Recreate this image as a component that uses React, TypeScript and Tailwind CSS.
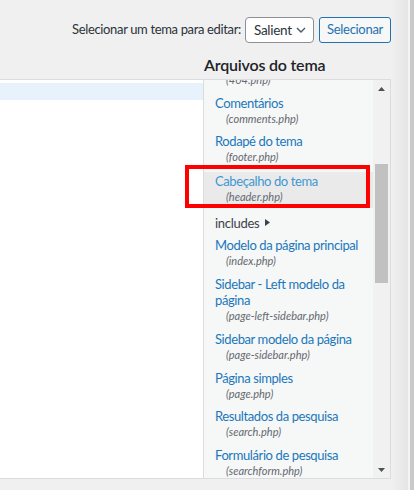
import React from "react";

type Item = { title: string[]; file?: string; hl?: boolean; dir?: boolean };

const items: Item[] = [
  { title: ["Comentários"], file: "comments.php" },
  { title: ["Rodapé do tema"], file: "footer.php" },
  { title: ["Cabeçalho do tema"], file: "header.php", hl: true },
  { title: ["includes"], dir: true },
  { title: ["Modelo da página principal"], file: "index.php" },
  { title: ["Sidebar - Left modelo da", "página"], file: "page-left-sidebar.php" },
  { title: ["Sidebar modelo da página"], file: "page-sidebar.php" },
  { title: ["Página simples"], file: "page.php" },
  { title: ["Resultados da pesquisa"], file: "search.php" },
  { title: ["Formulário de pesquisa"], file: "searchform.php" },
  { title: ["Single"], file: "single.php" },
];

function FileItem({ item }: { item: Item }) {
  return (
    <div className={item.hl ? "bg-[#eaeaea] pt-[1px] pb-[3px]" : ""}>
      {item.dir ? (
        <div className="flex items-center pl-[11px] leading-[16px] tracking-[-0.3px] text-[#3c434a]">
          <span>{item.title[0]}</span>
          <svg width="5" height="7" viewBox="0 0 5 7" className="ml-[6px]">
            <path d="M0 0 L5 3.5 L0 7 Z" fill="#3c434a" />
          </svg>
        </div>
      ) : (
        item.title.map((t) => (
          <div
            key={t}
            className={
              "whitespace-nowrap pl-[11px] leading-[16px] tracking-[-0.4px] " +
              (item.hl ? "text-[#3e97d1]" : "text-[#1b77bb]")
            }
          >
            {t}
          </div>
        ))
      )}
      {item.file && (
        <div className="whitespace-nowrap pl-[22px] text-[11px] italic leading-[16px] text-[#646970]">
          ({item.file})
        </div>
      )}
    </div>
  );
}

export default function App() {
  return (
    <div className="relative flex h-[490px] w-[414px] overflow-hidden bg-[#f0f0f1] font-['Lato','Liberation_Sans',sans-serif] text-[13px] text-[#3c434a]">
      <div className="flex w-[391px] flex-col">
        <div className="mt-[17px] flex h-[26px] items-center justify-end">
          <span className="mr-[4px] whitespace-nowrap tracking-[-0.35px] text-[#2c3338]">
            Selecionar um tema para editar:
          </span>
          <div className="flex h-[26px] w-[69px] items-center justify-between rounded-[4px] border border-[#8c8f94] bg-white pl-[8px] pr-[7px] text-[13.5px] tracking-[-0.3px] text-[#2c3338]">
            <span>Salient</span>
            <svg width="10" height="6" viewBox="0 0 10 6">
              <path d="M1 1 L5 5 L9 1" fill="none" stroke="#50575e" strokeWidth="1.4" />
            </svg>
          </div>
          <button className="ml-[5px] h-[26px] w-[72px] rounded-[3px] border border-[#2271b1] bg-[#f6f7f7] text-[13px] tracking-[-0.3px] text-[#2271b1]">
            Selecionar
          </button>
        </div>
        <div className="flex">
          <div className="w-[203px] pt-[36px]">
            <div className="h-[400px] border-y border-[#dcdcde] bg-white pt-[3px]">
              <div className="h-[17px] bg-[#e8f2fc]" />
            </div>
          </div>
          <div className="w-[188px]">
            <h2 className="h-[36px] whitespace-nowrap pl-[1px] pt-[12px] text-[16px] font-semibold leading-[20px] tracking-[-0.2px] text-[#1d2327]">
              Arquivos do tema
            </h2>
            <div className="flex h-[400px] border border-[#dcdcde] bg-[#f6f7f7]">
              <div className="w-[169px] overflow-hidden">
                <div className="mt-[-8px] flex flex-col gap-[6.7px]">
                  <div className="pl-[22px] text-[11px] italic leading-[16px] text-[#646970]">
                    (404.php)
                  </div>
                  {items.map((it) => (
                    <FileItem key={it.title[0]} item={it} />
                  ))}
                </div>
              </div>
              <div className="flex w-[17px] flex-col items-center bg-[#f1f1f1]">
                <div className="flex h-[17px] w-full items-center justify-center">
                  <svg width="7" height="4" viewBox="0 0 7 4">
                    <path d="M0 4 L3.5 0 L7 4 Z" fill="#505050" />
                  </svg>
                </div>
                <div className="mt-[67px] h-[119px] w-[13px] bg-[#c1c1c1]" />
                <div className="flex-1" />
                <div className="flex h-[17px] w-full items-center justify-center">
                  <svg width="7" height="4" viewBox="0 0 7 4">
                    <path d="M0 0 L7 0 L3.5 4 Z" fill="#505050" />
                  </svg>
                </div>
              </div>
            </div>
          </div>
        </div>
      </div>
      <div className="w-[17px] bg-linear-to-r from-[#f0f0f1] to-[#e5e5e5]" />
      <div className="w-[2px] bg-[#f4f4f4]" />
      <div className="w-[4px] bg-[#c9c9c9]" />
      <div className="absolute left-[185px] top-[165px] h-[43px] w-[185px] border-[4px] border-[#ff0000]" />
    </div>
  );
}
